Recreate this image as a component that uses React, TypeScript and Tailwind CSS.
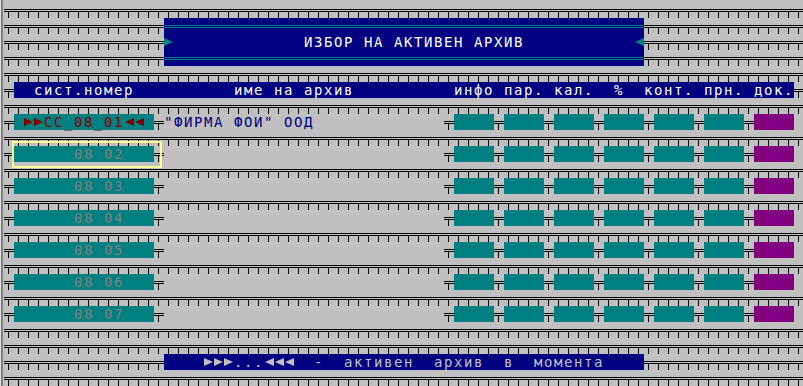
import type { ReactNode } from 'react'

const pat =
  'bg-[#c0c0c0] bg-[image:linear-gradient(transparent_7px,#000_7px,#000_8px,transparent_8px,transparent_9px,#000_9px,#000_10px,transparent_10px),linear-gradient(#c0c0c0_10px,transparent_10px),linear-gradient(90deg,transparent_4px,#000_4px,#000_5px,transparent_5px)] bg-[length:10px_16px]'

const tealLine =
  'h-4 bg-[image:linear-gradient(transparent_7px,#008080_7px,#008080_8px,transparent_8px,transparent_9px,#008080_9px,#008080_10px,transparent_10px)]'

// text-mode ► / ◄ glyph, one cell wide
const Tri = ({ dir }: { dir: 'r' | 'l' }) => (
  <svg className="inline-block align-top" width="10" height="16" viewBox="0 0 10 16">
    <polygon points={dir === 'r' ? '0,4 9,8 0,12' : '10,4 1,8 10,12'} fill="currentColor" />
  </svg>
)

const PatRow = () => <div className={`h-4 w-[800px] shrink-0 ${pat}`} />

function ArchiveRow({ label, name, active, current }: { label: ReactNode; name?: string; active?: boolean; current?: boolean }) {
  return (
    <div className="flex h-4 w-[800px] shrink-0">
      <div className={`w-[10px] h-4 ${pat}`} />
      <div className={`relative w-[140px] h-4 bg-[#008080] whitespace-pre ${current ? 'text-[#800000]' : 'text-[#808080]'}`}>
        {label}
        {active && <div className="absolute -left-[2px] -top-[5px] w-[150px] h-[27px] border-2 border-[#ffff99]" />}
      </div>
      <div className={`w-[10px] h-4 ${pat}`} />
      <div className="w-[280px] h-4 whitespace-pre text-[#000080]">{name}</div>
      {/* info / params / calendar / % / contacts / prn */}
      {[0, 1, 2, 3, 4, 5].map((i) => (
        <div key={i} className="flex">
          <div className={`w-[10px] h-4 ${pat}`} />
          <div className="w-10 h-4 bg-[#008080]" />
        </div>
      ))}
      <div className={`w-[10px] h-4 ${pat}`} />
      <div className="w-10 h-4 bg-[#800080]" />
      <div className="w-[10px] h-4" />
    </div>
  )
}

export default function App() {
  const rows = ['02', '03', '04', '05', '06', '07']

  return (
    <div className="w-[803px] h-[386px] overflow-hidden bg-[#c0c0c0] flex font-['DejaVu_Sans_Mono',monospace] text-[14px] leading-4 tracking-[1.57px]">
      {/* window edge */}
      <div className="w-[1px] h-full bg-[#dcdcdc]" />
      <div className="w-[2px] h-full bg-[#808080]" />
      <div className="w-[1px] h-full" />

      <div className="flex flex-col pt-[2px] w-[799px] overflow-hidden">
        <PatRow />

        {/* Title */}
        <div className="flex h-12 w-[800px] shrink-0">
          <div className={`w-[160px] h-12 ${pat}`} />
          <div className="w-[480px] h-12 bg-[#000080] flex flex-col">
            <div className={tealLine} />
            <div className="h-4 whitespace-pre text-white">
              <span className="text-[#008080]"><Tri dir="r" /></span>
              {'             ИЗБОР НА АКТИВЕН АРХИВ           '}
              <span className="text-[#008080]"><Tri dir="l" /></span>
            </div>
            <div className={tealLine} />
          </div>
          <div className={`w-[160px] h-12 ${pat}`} />
        </div>

        <PatRow />

        {/* Column header */}
        <div className="flex h-4 w-[800px] shrink-0">
          <div className={`w-[10px] h-4 ${pat}`} />
          <div className="w-[780px] h-4 bg-[#000080] text-white whitespace-pre">
            {'  сист.номер          име на архив          инфо пар. кал.  %  конт. прн. док.'}
          </div>
          <div className={`w-[10px] h-4 ${pat}`} />
        </div>

        <PatRow />

        <ArchiveRow
          label={
            <>
              {' '}
              <Tri dir="r" />
              <Tri dir="r" />
              CC_08_01
              <Tri dir="l" />
              <Tri dir="l" />
            </>
          }
          name={'"ФИРМА ФОИ" ООД'}
          current
        />
        {rows.map((r, i) => (
          <div key={r} className="flex flex-col">
            <PatRow />
            <ArchiveRow label={`      08 ${r}`} active={i === 0} />
          </div>
        ))}

        <PatRow />
        <PatRow />

        {/* Legend */}
        <div className="flex h-4 w-[800px] shrink-0">
          <div className={`w-[160px] h-4 ${pat}`} />
          <div className="w-[480px] h-4 bg-[#000080] text-[#c0c0c0] whitespace-pre">
            {'    '}
            <Tri dir="r" />
            <Tri dir="r" />
            <Tri dir="r" />
            {'...'}
            <Tri dir="l" />
            <Tri dir="l" />
            <Tri dir="l" />
            {'  -  активен  архив  в  момента'}
          </div>
          <div className={`w-[160px] h-4 ${pat}`} />
        </div>

        <PatRow />
      </div>
    </div>
  )
}
